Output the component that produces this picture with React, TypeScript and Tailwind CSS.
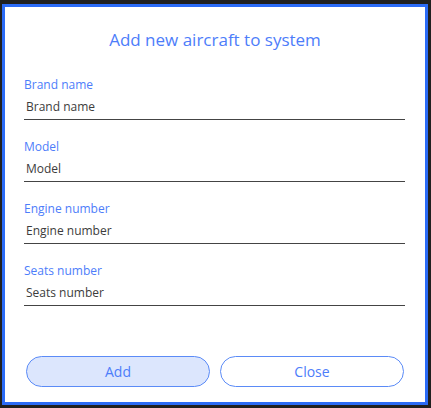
const fields = ["Brand name", "Model", "Engine number", "Seats number"];

function Field({ label }: { label: string }) {
  return (
    <div className="flex flex-col">
      <label className="text-[12px] leading-[16px] text-[#4d7dfa]">{label}</label>
      <input
        className="mt-[4px] h-[23px] w-full border-b border-[#444] bg-transparent pb-[3px] pl-[2px] text-[12px] leading-[20px] text-[#333] outline-none placeholder:text-[#3c3c3c]"
        placeholder={label}
      />
    </div>
  );
}

export default function App() {
  return (
    <div
      className="h-[408px] w-[431px] bg-[#202020] pt-[4px] pr-[3px] pb-[3px] pl-[2px]"
      style={{ fontFamily: '"Open Sans", "Noto Sans", sans-serif' }}
    >
      <div className="flex h-full flex-col border-[3px] border-[#2b6bf6] bg-white">
        <h1 className="mt-[21px] text-center text-[17px] leading-[24px] text-[#4d7dfa]">
          Add new aircraft to system
        </h1>
        <form className="mt-[25px] flex flex-col gap-[19px] pr-[20px] pl-[19px]">
          {fields.map((f) => (
            <Field key={f} label={f} />
          ))}
        </form>
        <div className="mt-auto grid grid-cols-2 gap-[10px] px-[21px] pb-[15px]">
          <button className="h-[31px] rounded-full border-[1.5px] border-[#5b8bf7] bg-[#dce6fd] text-[14px] text-[#4d7dfa]">
            Add
          </button>
          <button className="h-[31px] rounded-full border-[1.5px] border-[#5b8bf7] bg-white text-[14px] text-[#4d7dfa]">
            Close
          </button>
        </div>
      </div>
    </div>
  );
}
